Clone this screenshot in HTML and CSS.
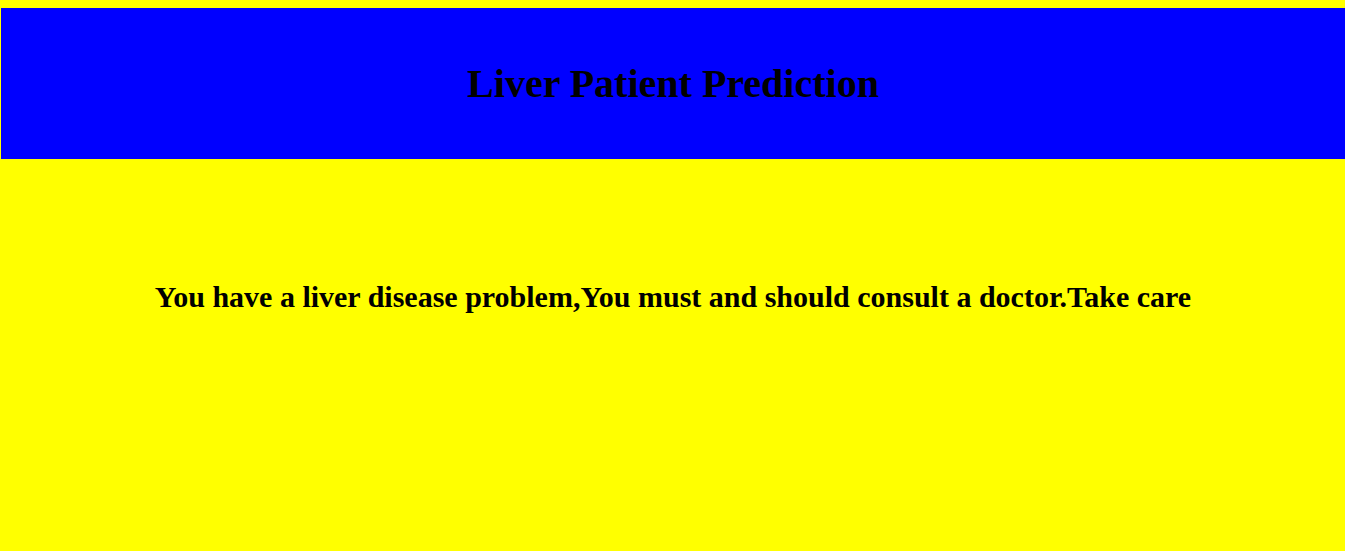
FILE: index.html
```html
<!DOCTYPE html>
<html>
<head>
<meta charset="utf-8">
<title>Liver Patient Prediction</title>
<link rel="stylesheet" href="styles.css">
</head>
<body>
<header class="banner">
  <h1 class="title">Liver Patient Prediction</h1>
</header>
<main class="result">
  <h2 class="message">You have a liver disease problem,You must and should consult a doctor.Take care</h2>
</main>
</body>
</html>
```

FILE: styles.css
```css
html {
  background: #ffff00;
}
body {
  margin: 8px 0 0 1px;
  font-family: "Liberation Serif", "Times New Roman", serif;
  color: #000;
}
.banner {
  background: #0000ff;
  height: 151px;
  display: flex;
  align-items: center;
  justify-content: center;
}
.title {
  margin: 0;
  font-size: 40px;
  font-weight: bold;
}
.result {
  display: flex;
  justify-content: center;
  padding-top: 121px;
}
.message {
  margin: 0;
  font-size: 30px;
  font-weight: bold;
}
```
